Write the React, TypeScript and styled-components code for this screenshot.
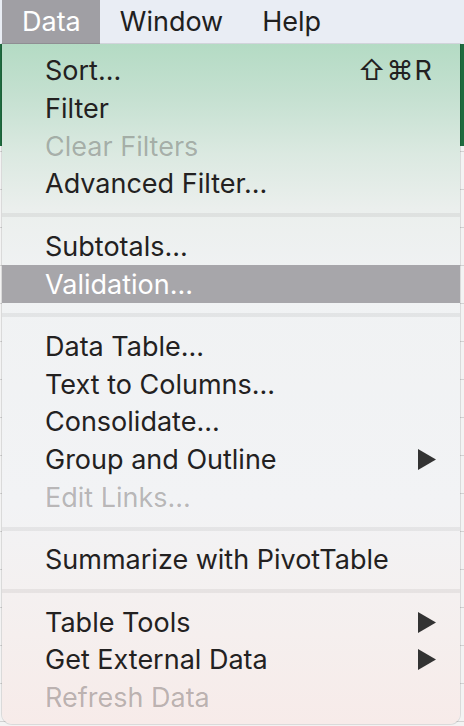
import styled, { createGlobalStyle } from "styled-components";

const GlobalStyle = createGlobalStyle`
  html, body {
    margin: 0;
    padding: 0;
  }
  body {
    width: 464px;
    height: 726px;
    overflow: hidden;
    font-family: Inter, "Liberation Sans", sans-serif;
    background:
      linear-gradient(to bottom, transparent 0 44px, #1f6b3f 44px 146px, transparent 146px),
      repeating-linear-gradient(to bottom, #f3f3f3 0 37px, #d2d2d2 37px 38px);
  }
`;

const Screen = styled.div`
  width: 464px;
  height: 726px;
  display: flex;
  flex-direction: column;
`;

const MenuBar = styled.div`
  height: 44px;
  display: flex;
  padding-left: 2px;
  background: #e9edf4;
`;

const MenuTitle = styled.div<{ $active?: boolean }>`
  padding: 0 19px 0 20px;
  font-size: 27px;
  line-height: 44px;
  color: ${(p) => (p.$active ? "#ffffff" : "#202020")};
  background: ${(p) => (p.$active ? "#a09fa4" : "transparent")};
`;

const Dropdown = styled.div`
  margin: 0 4px 0 2px;
  padding: 8px 0 7px;
  border-radius: 0 0 10px 10px;
  box-shadow: 0 0 0 1px rgba(0, 0, 0, 0.1);
  background: linear-gradient(
    to bottom,
    #b4dbc4 0px,
    #c4e0d0 50px,
    #dbe9e1 110px,
    #ebefed 165px,
    #f0f2f3 230px,
    #f2f3f5 460px,
    #f5efee 590px,
    #f7ebe9 680px
  );
`;

const Item = styled.div<{ $disabled?: boolean; $selected?: boolean }>`
  height: 37.7px;
  padding: 0 24px 0 43px;
  display: flex;
  align-items: center;
  justify-content: space-between;
  font-size: 27px;
  white-space: nowrap;
  color: ${(p) =>
    p.$selected ? "#ffffff" : p.$disabled ? "rgba(40, 30, 30, 0.3)" : "#232121"};
  background: ${(p) => (p.$selected ? "#a7a6aa" : "transparent")};
`;

const Shortcut = styled.span`
  font-size: 27px;
  letter-spacing: 1px;
  margin-right: 3px;
`;

const Separator = styled.div`
  height: 24.8px;
  display: flex;
  align-items: center;
  &::after {
    content: "";
    flex: 1;
    height: 4px;
    background: rgba(0, 0, 0, 0.055);
  }
`;

const Arrow = () => (
  <svg width="18" height="21" viewBox="0 0 18 21">
    <polygon points="0,0 18,10.5 0,21" fill="#333" />
  </svg>
);

type Entry =
  | { sep: true }
  | { label: string; disabled?: boolean; selected?: boolean; shortcut?: string; sub?: boolean };

const entries: Entry[] = [
  { label: "Sort...", shortcut: "⇧⌘R" },
  { label: "Filter" },
  { label: "Clear Filters", disabled: true },
  { label: "Advanced Filter..." },
  { sep: true },
  { label: "Subtotals..." },
  { label: "Validation...", selected: true },
  { sep: true },
  { label: "Data Table..." },
  { label: "Text to Columns..." },
  { label: "Consolidate..." },
  { label: "Group and Outline", sub: true },
  { label: "Edit Links...", disabled: true },
  { sep: true },
  { label: "Summarize with PivotTable" },
  { sep: true },
  { label: "Table Tools", sub: true },
  { label: "Get External Data", sub: true },
  { label: "Refresh Data", disabled: true },
];

export default function App() {
  return (
    <Screen>
      <GlobalStyle />
      <MenuBar>
        <MenuTitle $active>Data</MenuTitle>
        <MenuTitle>Window</MenuTitle>
        <MenuTitle>Help</MenuTitle>
      </MenuBar>
      <Dropdown>
        {entries.map((e, i) =>
          "sep" in e ? (
            <Separator key={i} />
          ) : (
            <Item key={i} $disabled={e.disabled} $selected={e.selected}>
              <span>{e.label}</span>
              {e.shortcut && <Shortcut>{e.shortcut}</Shortcut>}
              {e.sub && <Arrow />}
            </Item>
          )
        )}
      </Dropdown>
    </Screen>
  );
}
